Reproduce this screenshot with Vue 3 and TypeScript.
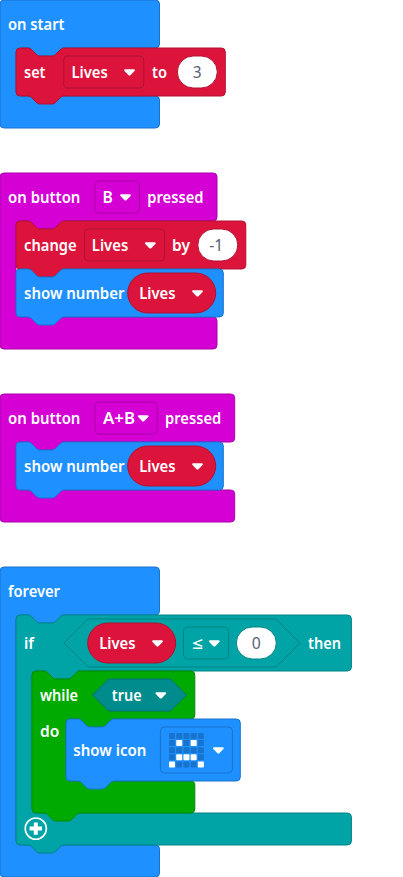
<script setup lang="ts">
type Tone = 'blue' | 'red' | 'magenta' | 'teal' | 'green' | 'deep'

interface Shape { x: number; y: number; d: string; tone: Tone }
interface Label { x: number; y: number; text: string; width: number; kind?: 'value' | 'field' }
interface Box { x: number; y: number; w: number; h: number; r: number; tone: Tone; kind: 'field' | 'value' | 'pill' }
interface Point { x: number; y: number }
interface Stack {
  name: string
  width: number
  height: number
  shapes: Shape[]
  boxes: Box[]
  labels: Label[]
  arrows: Point[]
  icon?: Point
  plus?: Point
}

const NOTCH = 'c2 0 3 1 4 2l4 4c1 1 2 2 4 2h12c2 0 3 -1 4 -2l4 -4c1 -1 2 -2 4 -2'
const TAB = 'c-2 0 -3 1 -4 2l-4 4c-1 1 -2 2 -4 2h-12c-2 0 -3 -1 -4 -2l-4 -4c-1 -1 -2 -2 -4 -2'

const topEdge = (w: number, notch: boolean) =>
  `M0 4a4 4 0 0 1 4 -4h8${notch ? NOTCH : ''}H${w - 4}a4 4 0 0 1 4 4`

const bottomEdge = (h: number, tab: boolean) =>
  `V${h - 4}a4 4 0 0 1 -4 4${tab ? 'H48' + TAB : ''}H4a4 4 0 0 1 -4 -4Z`

const statement = (w: number, h: number) => topEdge(w, true) + bottomEdge(h, true)

// A block that wraps other blocks: a head, an inner mouth and a 32px foot.
const wrapper = (w: number, head: number, mouth: number, indent: number, linked: boolean) =>
  topEdge(w, linked) +
  `V${head - 4}a4 4 0 0 1 -4 4H${indent + 48}${TAB}h-8a4 4 0 0 0 -4 4` +
  `V${head + mouth - 4}a4 4 0 0 0 4 4H${w - 4}a4 4 0 0 1 4 4` +
  bottomEdge(head + mouth + 32, linked)

const hexagon = (w: number, h: number) =>
  `M${h / 2} 0H${w - h / 2}L${w} ${h / 2}L${w - h / 2} ${h}H${h / 2}L0 ${h / 2}Z`

const stacks: Stack[] = [
  {
    name: 'on-start', width: 403, height: 128,
    shapes: [
      { x: 0, y: 0, d: wrapper(159.5, 48, 48, 16, false), tone: 'blue' },
      { x: 16, y: 48, d: statement(209.3, 48), tone: 'red' },
    ],
    boxes: [
      { x: 63.8, y: 56, w: 80, h: 32, r: 4, tone: 'red', kind: 'field' },
      { x: 177.3, y: 56, w: 40, h: 32, r: 16, tone: 'red', kind: 'value' },
    ],
    labels: [
      { x: 8, y: 29.6, text: 'on start', width: 56.5 },
      { x: 24, y: 77.6, text: 'set', width: 21.5 },
      { x: 71.4, y: 77.6, text: 'Lives', width: 36.4 },
      { x: 152, y: 77.6, text: 'to', width: 15 },
      { x: 192.8, y: 77.6, text: '3', width: 8.8, kind: 'value' },
    ],
    arrows: [{ x: 129.5, y: 72 }],
  },
  {
    name: 'button-b', width: 403, height: 176,
    shapes: [
      { x: 0, y: 0, d: wrapper(217, 48, 96, 16, false), tone: 'magenta' },
      { x: 16, y: 48, d: statement(229.8, 48), tone: 'red' },
      { x: 16, y: 96, d: statement(207.3, 48), tone: 'blue' },
    ],
    boxes: [
      { x: 95, y: 8, w: 44.5, h: 32, r: 4, tone: 'magenta', kind: 'field' },
      { x: 84.5, y: 56, w: 80, h: 32, r: 4, tone: 'red', kind: 'field' },
      { x: 197.8, y: 56, w: 40, h: 32, r: 16, tone: 'red', kind: 'value' },
      { x: 127.7, y: 100, w: 88, h: 40, r: 20, tone: 'red', kind: 'pill' },
    ],
    labels: [
      { x: 8, y: 29.6, text: 'on button', width: 72.4 },
      { x: 102.6, y: 29.6, text: 'B', width: 10.3 },
      { x: 147.3, y: 29.6, text: 'pressed', width: 56.2 },
      { x: 24, y: 77.6, text: 'change', width: 52.6 },
      { x: 91.8, y: 77.6, text: 'Lives', width: 36.4 },
      { x: 172, y: 77.6, text: 'by', width: 18 },
      { x: 209.2, y: 77.6, text: '-1', width: 14, kind: 'value' },
      { x: 24, y: 125.6, text: 'show number', width: 100.5 },
      { x: 139.2, y: 125.6, text: 'Lives', width: 36.4 },
    ],
    arrows: [{ x: 125.5, y: 24 }, { x: 150.3, y: 72 }, { x: 197.5, y: 120 }],
  },
  {
    name: 'button-ab', width: 403, height: 128,
    shapes: [
      { x: 0, y: 0, d: wrapper(234.7, 48, 48, 16, false), tone: 'magenta' },
      { x: 16, y: 48, d: statement(207.3, 48), tone: 'blue' },
    ],
    boxes: [
      { x: 95, y: 8, w: 62.2, h: 32, r: 4, tone: 'magenta', kind: 'field' },
      { x: 127.7, y: 52, w: 88, h: 40, r: 20, tone: 'red', kind: 'pill' },
    ],
    labels: [
      { x: 8, y: 29.6, text: 'on button', width: 72.4 },
      { x: 103, y: 29.6, text: 'A+B', width: 32 },
      { x: 165, y: 29.6, text: 'pressed', width: 56.2 },
      { x: 24, y: 77.6, text: 'show number', width: 100.5 },
      { x: 139.2, y: 77.6, text: 'Lives', width: 36.4 },
    ],
    arrows: [{ x: 143.2, y: 24 }, { x: 197.5, y: 72 }],
  },
  {
    name: 'forever', width: 403, height: 310,
    shapes: [
      { x: 0, y: 0, d: wrapper(159.5, 48, 230, 16, false), tone: 'blue' },
      { x: 16, y: 48, d: wrapper(335.4, 56, 142, 16, true), tone: 'teal' },
      { x: 64, y: 52, d: hexagon(236, 48), tone: 'teal' },
      { x: 32, y: 104, d: wrapper(162.8, 48, 62, 34, true), tone: 'green' },
      { x: 92.5, y: 112, d: hexagon(94, 32), tone: 'deep' },
      { x: 66, y: 152, d: statement(174.3, 62), tone: 'blue' },
    ],
    boxes: [
      { x: 87.7, y: 56, w: 88, h: 40, r: 20, tone: 'red', kind: 'pill' },
      { x: 183.5, y: 60, w: 45, h: 32, r: 4, tone: 'teal', kind: 'field' },
      { x: 236.3, y: 60, w: 40, h: 32, r: 16, tone: 'teal', kind: 'value' },
      { x: 160.4, y: 160, w: 72, h: 46, r: 4, tone: 'blue', kind: 'field' },
    ],
    labels: [
      { x: 8, y: 29.6, text: 'forever', width: 52 },
      { x: 24, y: 81.6, text: 'if', width: 10 },
      { x: 99.2, y: 81.6, text: 'Lives', width: 36.4 },
      { x: 192, y: 81.6, text: '≤', width: 10.8 },
      { x: 251.8, y: 81.6, text: '0', width: 9, kind: 'value' },
      { x: 308, y: 81.6, text: 'then', width: 33 },
      { x: 40, y: 133.6, text: 'while', width: 38 },
      { x: 111.8, y: 133.6, text: 'true', width: 29.8 },
      { x: 40, y: 170, text: 'do', width: 19.3 },
      { x: 73.3, y: 188.6, text: 'show icon', width: 73 },
    ],
    arrows: [{ x: 157.5, y: 76 }, { x: 214.3, y: 76 }, { x: 160.8, y: 128 }, { x: 218.4, y: 183 }],
    icon: { x: 169, y: 165.9 },
    plus: { x: 35.8, y: 261.6 },
  },
]

const sadFace = ['.....', '.#.#.', '.....', '.###.', '#...#']
const leds = sadFace.flatMap((row, r) =>
  [...row].map((c, i) => ({ x: i * 7.22, y: r * 7.15, on: c === '#' })),
)
</script>

<template>
  <main class="workspace">
    <svg
      v-for="s in stacks"
      :key="s.name"
      class="stack"
      :width="s.width"
      :height="s.height"
      :viewBox="`0 0 ${s.width} ${s.height}`"
    >
      <path
        v-for="(p, i) in s.shapes"
        :key="'p' + i"
        :class="['shape', p.tone]"
        :d="p.d"
        :transform="`translate(${p.x} ${p.y})`"
      />
      <rect
        v-for="(b, i) in s.boxes"
        :key="'b' + i"
        :class="['shape', b.tone, b.kind]"
        :x="b.x"
        :y="b.y"
        :width="b.w"
        :height="b.h"
        :rx="b.r"
      />
      <text
        v-for="(l, i) in s.labels"
        :key="'l' + i"
        :class="['label', l.kind]"
        :x="l.x"
        :y="l.y"
        :textLength="l.width"
        lengthAdjust="spacingAndGlyphs"
      >{{ l.text }}</text>
      <path
        v-for="(a, i) in s.arrows"
        :key="'a' + i"
        class="arrow"
        d="M-4.4 -2.7H4.4C5.5 -2.7 5.7 -1.6 5 -0.9L1.2 2.9Q0 4 -1.2 2.9L-5 -0.9C-5.7 -1.6 -5.5 -2.7 -4.4 -2.7Z"
        :transform="`translate(${a.x} ${a.y})`"
      />
      <g v-if="s.icon" :transform="`translate(${s.icon.x} ${s.icon.y})`">
        <rect
          v-for="(c, i) in leds"
          :key="'c' + i"
          :class="['led', { on: c.on }]"
          :x="c.x"
          :y="c.y"
          width="6"
          height="6"
          rx="0.8"
        />
      </g>
      <g v-if="s.plus" :transform="`translate(${s.plus.x} ${s.plus.y})`">
        <circle class="ring" r="10.6" />
        <path class="cross" d="M-6.2 0H6.2M0 -6.2V6.2" />
      </g>
    </svg>
  </main>
</template>

<style>
body {
  background: #fff;
}
</style>

<style scoped>
.workspace {
  display: flex;
  flex-direction: column;
  gap: 45px;
  width: 403px;
  height: 877px;
  overflow: hidden;
}
.stack {
  display: block;
  flex: none;
  overflow: visible;
}
.shape {
  stroke-width: 1;
}
.blue {
  fill: #1e90ff;
  stroke: #1873cc;
}
.red {
  fill: #dc143c;
  stroke: #b01030;
}
.magenta {
  fill: #d400d4;
  stroke: #aa00aa;
}
.teal {
  fill: #00a4a6;
  stroke: #008385;
}
.green {
  fill: #00aa00;
  stroke: #008800;
}
.deep {
  fill: #008b8d;
  stroke: #007072;
}
.value {
  fill: #fff;
}
.label {
  fill: #fff;
  font: 600 16px 'Noto Sans', 'Open Sans', sans-serif;
}
.label.value {
  fill: #575e75;
  font-weight: 400;
}
.arrow {
  fill: #fff;
}
.led {
  fill: #1873cc;
}
.led.on {
  fill: #fff;
}
.ring {
  fill: none;
  stroke: #fff;
  stroke-width: 1.6;
}
.cross {
  fill: none;
  stroke: #fff;
  stroke-width: 4;
}
</style>
